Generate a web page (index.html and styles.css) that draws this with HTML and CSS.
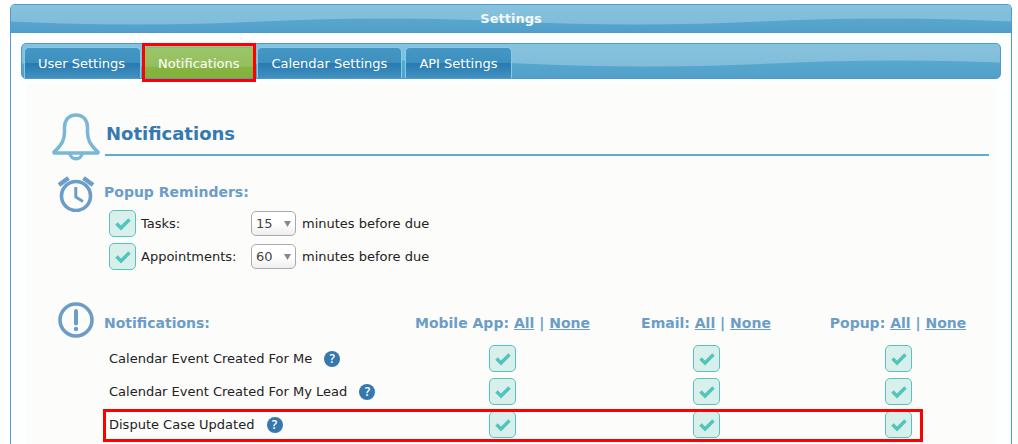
FILE: index.html
```
<!DOCTYPE html>
<html lang="en">
<head>
  <meta charset="UTF-8">
  <meta name="viewport" content="width=device-width, initial-scale=1.0">
  <title>Settings</title>
  <link rel="stylesheet" href="styles.css">
</head>
<body>
  <div class="window">
    <h1 class="titlebar">Settings</h1>

    <nav class="tabs">
      <a class="tab" href="#user">User Settings</a>
      <a class="tab active" href="#notifications">Notifications</a>
      <a class="tab" href="#calendar">Calendar Settings</a>
      <a class="tab" href="#api">API Settings</a>
    </nav>

    <main class="panel" id="notifications">
      <div class="page-head">
        <svg class="bell" viewBox="0 0 48 48" fill="none" stroke="#78b7d7" stroke-width="3.5" stroke-linejoin="round">
          <path d="M2 39C8 34 12.500 28 12.500 20V14.500C12.500 7 17 2 24 2S35.500 7 35.500 14.500V20C35.500 28 40 34 46 39V40H2Z"/>
          <path d="M18 40.500C18.500 47.500 29.500 47.500 30 40.500"/>
        </svg>
        <h2>Notifications</h2>
      </div>

      <section class="block reminders">
        <svg class="icon" viewBox="0 0 36 36" fill="none" stroke="#6c9dc8" stroke-width="3.600">
          <circle cx="18" cy="20" r="14.500"/>
          <path d="M1 9L10.500 2M35 9L25.500 2" stroke-width="4.500"/>
          <path d="M17.800 11V21L25 25.500" stroke-width="3"/>
        </svg>
        <div class="content">
          <h3>Popup Reminders:</h3>
          <div class="reminder">
            <input type="checkbox" id="tasks" checked>
            <label class="name" for="tasks">Tasks:</label>
            <select id="tasks-min" aria-label="Tasks reminder minutes"><option>5</option><option selected>15</option><option>60</option></select>
            <label for="tasks-min">minutes before due</label>
          </div>
          <div class="reminder">
            <input type="checkbox" id="appts" checked>
            <label class="name" for="appts">Appointments:</label>
            <select id="appts-min" aria-label="Appointments reminder minutes"><option>15</option><option>30</option><option selected>60</option></select>
            <label for="appts-min">minutes before due</label>
          </div>
        </div>
      </section>

      <section class="block">
        <svg class="icon" viewBox="0 0 36 36" fill="none" stroke="#6c9dc8" stroke-width="3.600">
          <circle cx="18" cy="18" r="16"/>
          <path d="M18 9V21.500" stroke-width="4" stroke-linecap="round"/>
          <circle cx="18" cy="27" r="2.200" fill="#6c9dc8" stroke="none"/>
        </svg>
        <div class="content">
          <table>
            <colgroup>
              <col>
              <col class="col-mobile">
              <col class="col-email">
              <col class="col-popup">
            </colgroup>
            <thead>
              <tr>
                <th scope="col" class="first">Notifications:</th>
                <th scope="col">Mobile App: <a href="#all">All</a> | <a href="#none">None</a></th>
                <th scope="col">Email: <a href="#all">All</a> | <a href="#none">None</a></th>
                <th scope="col">Popup: <a href="#all">All</a> | <a href="#none">None</a></th>
              </tr>
            </thead>
            <tbody>
              <tr>
                <td class="event">Calendar Event Created For Me <button class="help" type="button">?</button></td>
                <td><input type="checkbox" aria-label="Event for me, mobile app" checked></td>
                <td><input type="checkbox" aria-label="Event for me, email" checked></td>
                <td><input type="checkbox" aria-label="Event for me, popup" checked></td>
              </tr>
              <tr>
                <td class="event">Calendar Event Created For My Lead <button class="help" type="button">?</button></td>
                <td><input type="checkbox" aria-label="Event for my lead, mobile app" checked></td>
                <td><input type="checkbox" aria-label="Event for my lead, email" checked></td>
                <td><input type="checkbox" aria-label="Event for my lead, popup" checked></td>
              </tr>
              <tr class="marked">
                <td class="event">Dispute Case Updated <button class="help" type="button">?</button><span class="callout"></span></td>
                <td><input type="checkbox" aria-label="Dispute case, mobile app" checked></td>
                <td><input type="checkbox" aria-label="Dispute case, email" checked></td>
                <td><input type="checkbox" aria-label="Dispute case, popup" checked></td>
              </tr>
            </tbody>
          </table>
        </div>
      </section>
    </main>
  </div>
</body>
</html>
```
FILE: styles.css
```
* {
  box-sizing: border-box;
}
body {
  margin: 0;
  padding: 4px 6px 0 10px;
  min-height: 100vh;
  display: flex;
  flex-direction: column;
  background: #fff;
  color: #222;
  font: 13px/18px "DejaVu Sans", Verdana, sans-serif;
}
h1, h2, h3 {
  margin: 0;
}
.window {
  flex: 1;
  display: flex;
  flex-direction: column;
  border: 1px solid #4f9ad3;
  border-bottom: 0;
  border-radius: 5px 5px 0 0;
  background: #fcfffe;
}

/* glossy wave bars */
.titlebar, .tabs {
  background:
    url("data:image/svg+xml,%3Csvg xmlns='http://www.w3.org/2000/svg' width='500' height='100'%3E%3Cpath d='M0 0V52.500C80 56.500 170 56.500 250 52.500S420 48.500 500 52.500V0Z' fill='%23fff' fill-opacity='.26'/%3E%3C/svg%3E") repeat-x 0 50%,
    linear-gradient(#5caed2, #52a0ca);
}
.titlebar {
  height: 28px;
  border-bottom: 1px solid #4f9ad3;
  border-radius: 4px 4px 0 0;
  color: #f4fafd;
  font-size: 13px;
  line-height: 28px;
  text-align: center;
}
.tabs {
  display: flex;
  gap: 3px;
  height: 36px;
  margin: 10px 10px 0;
  padding: 3px 2px 0;
  border: 1px solid #4f9ad3;
  border-radius: 5px;
}
.tab {
  height: 31px;
  padding: 0 14px 0 13px;
  border: 1px solid #7dcdeb;
  border-bottom: 0;
  border-radius: 5px 5px 0 0;
  background: linear-gradient(#4496c3 0, #3e90bf 50%, #2779b0 50%, #4292c0 100%);
  color: #fff;
  line-height: 31px;
  text-decoration: none;
  white-space: nowrap;
}
.tab:first-child {
  padding-right: 15px;
}
.tab.active {
  position: relative;
  border-color: #8fc43f;
  background: linear-gradient(#9cc568, #95bf5d 60%, #86b540 65%, #80b23c);
}

/* red callouts drawn over the active tab and the last row */
.tab.active::after, .callout {
  content: "";
  position: absolute;
  border: 3px solid #f00;
  pointer-events: none;
}
.tab.active::after {
  inset: -5px -3px -4px -3px;
}
.marked {
  position: relative;
}
.callout {
  inset: 1px 66px -1px -1px;
}

.panel {
  flex: 1;
  margin: 5px 15px 0;
  padding: 29px 7px 0 26px;
  border-radius: 6px 6px 0 0;
  background: #fcfcfa;
}
.page-head {
  display: flex;
  gap: 5px;
}
.bell {
  width: 48px;
  height: 48px;
}
.page-head h2 {
  flex: 1;
  height: 43px;
  padding: 9px 1px 0;
  border-bottom: 2px solid #5fabd1;
  color: #3579b1;
  font-size: 18px;
  line-height: 24px;
}
.block {
  display: flex;
  gap: 10px;
  padding-left: 6px;
}
.reminders {
  margin: 15px 0 29px;
}
.icon {
  flex: none;
  width: 36px;
  height: 36px;
}
.content {
  flex: 1;
}
h3, th {
  color: #6c9dc8;
  font-size: 14px;
  font-weight: bold;
}
h3 {
  padding: 7px 0 6px;
}
.reminder {
  display: flex;
  align-items: center;
  height: 33px;
  padding-left: 5px;
}
.name {
  width: 110px;
  margin-left: 5px;
}
.reminder select {
  width: 45px;
  height: 25px;
  margin-right: 6px;
  padding: 0 4px;
  border: 1px solid #aaa;
  border-radius: 5px;
  appearance: none;
  background:
    url("data:image/svg+xml,%3Csvg xmlns='http://www.w3.org/2000/svg' width='7' height='6'%3E%3Cpath d='M0 0H7L3.500 6Z' fill='%23888'/%3E%3C/svg%3E") no-repeat right 4px center,
    linear-gradient(#fff 50%, #eee);
  color: #444;
  font: inherit;
}
input[type=checkbox] {
  flex: none;
  display: block;
  width: 27px;
  height: 27px;
  margin: 0;
  border: 1px solid #53c5bc;
  border-radius: 5px;
  appearance: none;
  background: #d8efec;
}
input[type=checkbox]:checked {
  background: #d8efec url("data:image/svg+xml,%3Csvg xmlns='http://www.w3.org/2000/svg' width='25' height='25'%3E%3Cpath d='M6.500 12.500L11 17L19.500 8.500' fill='none' stroke='%2350c5bb' stroke-width='3.400'/%3E%3C/svg%3E") no-repeat center;
}

table {
  width: 100%;
  border-collapse: collapse;
  table-layout: fixed;
}
.col-mobile {
  width: 205px;
}
.col-email {
  width: 202px;
}
.col-popup {
  width: 182px;
}
th {
  height: 40px;
  padding: 2px 0 0;
  white-space: nowrap;
}
th.first {
  text-align: left;
}
th a {
  color: inherit;
}
td {
  height: 33px;
  padding: 0;
}
td input[type=checkbox] {
  margin: 0 auto;
}
.event {
  padding-left: 5px;
  white-space: nowrap;
}
.help {
  width: 16px;
  height: 16px;
  margin-left: 8px;
  padding: 0;
  border: 0;
  border-radius: 50%;
  background: #3578b0;
  color: #fff;
  font: 600 12px/16px "Open Sans", sans-serif;
}
```
